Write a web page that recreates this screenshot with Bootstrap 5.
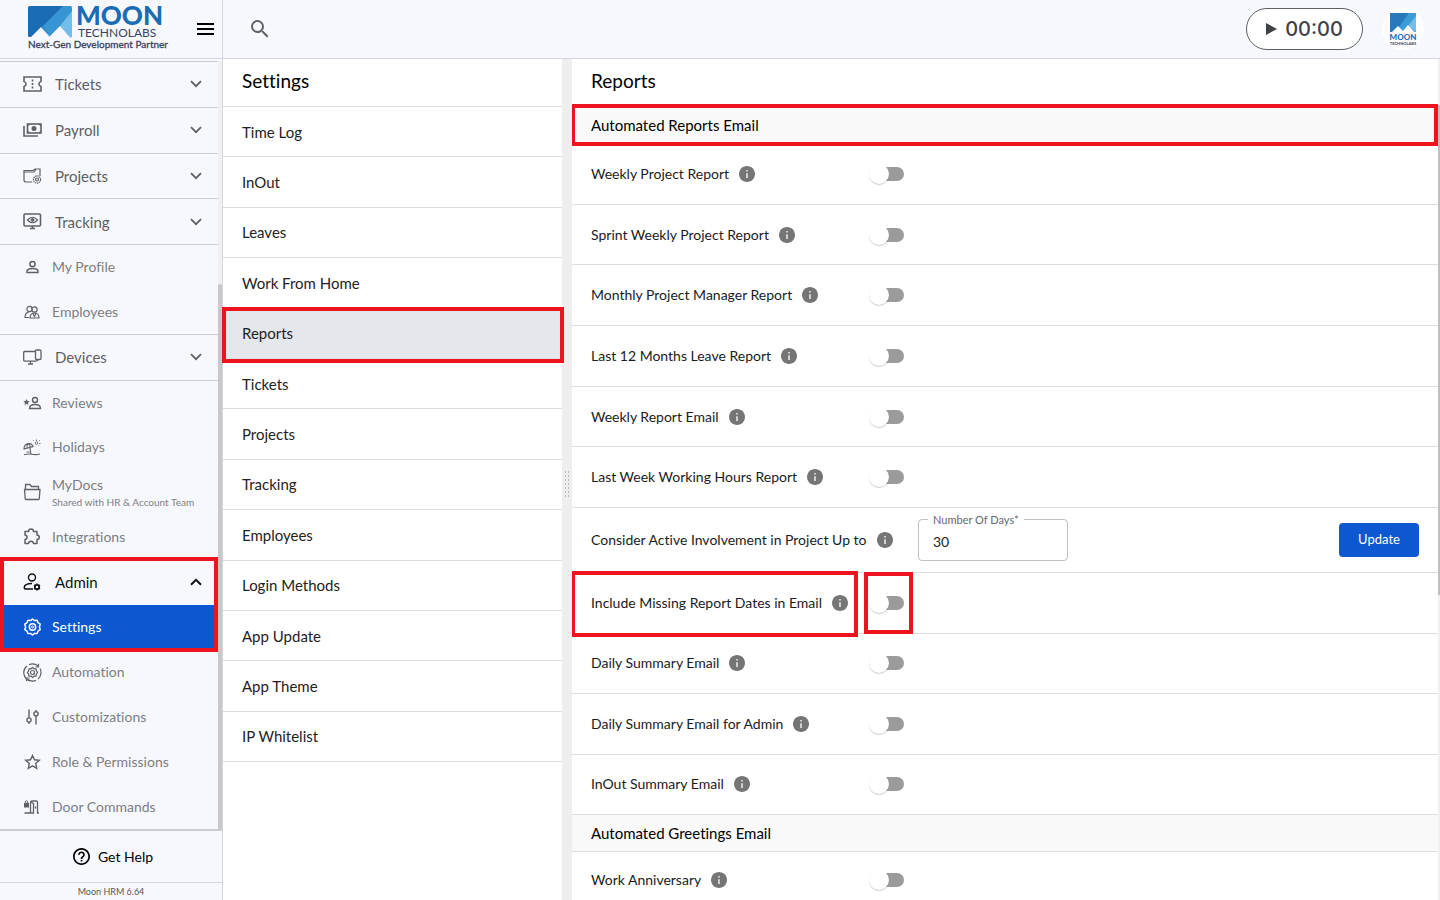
<!DOCTYPE html>
<html lang="en">
<head>
<meta charset="utf-8">
<meta name="viewport" content="width=device-width, initial-scale=1">
<title>Moon HRM - Settings - Reports</title>
<link href="https://cdn.jsdelivr.net/npm/bootstrap@5.3.0/dist/css/bootstrap.min.css" rel="stylesheet">
<style>
  :root { --line: #dcdee0; --blue: #0d57d0; --red: #ed1420; --pale: #f7f8fd; }
  body { font-family: Lato, "Open Sans", sans-serif; font-size: 14px; line-height: 20px; color: #1f2123; background: #fff; font-variant-ligatures: none; }
  a { text-decoration: none; color: inherit; }
  svg { flex: none; }
  .app { height: 100vh; display: grid; grid-template-columns: 223px minmax(0, 1fr); grid-template-rows: 59px minmax(0, 1fr); }
  .brand, .topbar { background: var(--pale); border-bottom: 1px solid #d3d6dc; }
  .brand, .sidebar { border-right: 1px solid #d3d6dc; }
  .icon-btn { border: 0; background: none; padding: 0; display: flex; }
  .timer { width: 117px; height: 42px; border: 1px solid #5c6066; border-radius: 21px; background: #fff; color: #3f4145; font-family: Inter, sans-serif; font-size: 20px; font-weight: 500; }
  .avatar { width: 42px; height: 42px; background: #fff; margin: 0 16px 0 19px; }

  .sidebar { background: var(--pale); min-height: 0; }
  .side-scroll { flex: 1 1 0; min-height: 0; padding-top: 2px; border-bottom: 2px solid #c9ccd0; }
  .side-menu { flex: 1 1 0; min-width: 0; display: flex; flex-direction: column; }
  .side-track { width: 4px; background: #f0f0f0; display: flex; flex-direction: column; justify-content: flex-end; }
  .side-thumb { height: 71%; background: #c8c8c8; border-radius: 2px 2px 0 0; }
  .side-group, .side-item { flex: 0 1 45px; min-height: 0; display: flex; align-items: center; padding-left: 23px; color: #7c7e82; width: 100%; }
  .side-group { flex-basis: 46px; gap: 13px; padding-right: 16px; border: 0; border-top: 1px solid #c9ccd1; background: none; font-size: 15px; color: #5c5e62; text-align: left; }
  .side-group span { flex: 1; }
  .side-item { gap: 10px; }
  .side-item svg, .side-group svg:first-child { color: #5f6165; }
  .line-top { border-top: 1px solid #c9ccd1; }
  .side-note { font-size: 10px; line-height: 14px; }
  .admin-block { position: relative; display: flex; flex-direction: column; flex: 0 1 91px; min-height: 0; }
  .admin-block .side-group, .admin-block .side-group svg:first-child { color: #101113; border: 0; }
  .side-item.current, .side-item.current svg { background: var(--blue); color: #fff; }
  .help { height: 51px; color: #000; }
  .version { height: 18px; border-top: 1px solid #d3d6dc; font-size: 9px; line-height: 18px; color: #55575b; }

  .mark-box { position: absolute; border: 4px solid var(--red); pointer-events: none; z-index: 2; }
  .mark-admin { inset: -2px 0 -2px 0; }
  .mark-current { inset: -2px -2px -5px -1px; }
  .mark-head { inset: -3px 0 -3px -1px; }
  .mark-label { inset: -2px auto -4px -1px; width: 287px; }
  .mark-switch { inset: -1px auto -1px 292px; width: 49px; }

  .panes { display: grid; grid-template-columns: 339fr 10px 868fr; min-height: 0; }
  .pane { min-width: 0; overflow: hidden; }
  .pane-title { height: 47px; padding: 0 19px; font-size: 19px; line-height: 44px; margin: 0; font-weight: 400; color: #000; }
  .option-list { display: flex; flex-direction: column; min-height: 656px; border-top: 1px solid var(--line); }
  .option-list a { flex: 1 1 0; position: relative; display: flex; align-items: center; padding: 0 19px; border-bottom: 1px solid var(--line); font-size: 15px; }
  .option-list a.current { background: #e4e7ec; }
  .splitter { background: #eee; }
  .grip { width: 6px; height: 29px; background: radial-gradient(circle, #bbb 1px, transparent 1px) 0 0 / 3px 4px; }
  .content-track { width: 2px; background: #f0f0f0; padding-top: 46px; }
  .content-thumb { height: 61%; background: #bfbfbf; }
  .section-head { position: relative; height: 38px; margin: 0; padding: 0 19px; font-size: 15px; font-weight: 400; line-height: 36px; color: #000; background: #f9f9f9; border-top: 1px solid var(--line); border-bottom: 1px solid var(--line); }
  .rows { display: flex; flex-direction: column; }
  .rows-six { min-height: 364px; }
  .rows-four { min-height: 241px; }
  .report-row { flex: 1 1 0; min-height: 57px; position: relative; display: flex; align-items: center; padding: 0 19px; border-bottom: 1px solid var(--line); }
  .rows-four .report-row:last-child { border-bottom: 0; }
  .label-cell { display: flex; align-items: center; gap: 10px; min-width: 279px; color: #1a1b1d; }
  .label-cell svg { color: #757575; }
  .days-row { flex: none; height: 65px; }
  .days-row .label-cell { min-width: 327px; }
  .toggle { appearance: none; position: relative; width: 34px; height: 14px; margin: 0; border-radius: 7px; background: #9b9b9b; cursor: pointer; }
  .toggle::before { content: ""; position: absolute; left: -1px; top: -3px; width: 20px; height: 20px; border-radius: 50%; background: #fff; box-shadow: 0 1px 1px rgba(0,0,0,.2); }
  .toggle:checked::before { left: 15px; background: var(--blue); }
  .days-field { position: relative; width: 150px; }
  .days-field input { height: 42px; border-color: #bfc1c4; border-radius: 4px; padding: 2px 14px 0; font-size: 14px; color: #1a1b1d; }
  .days-field label { position: absolute; left: 10px; top: -8px; padding: 0 5px; background: #fff; font-size: 11px; line-height: 18px; color: #66686c; }
  .btn-update { width: 80px; height: 34px; padding: 0; background: var(--blue); color: #fff; font-size: 13px; border-radius: 4px; }
  .btn-update:hover { background: #0b49b0; color: #fff; }
</style>
</head>
<body>
<svg width="0" height="0" class="position-absolute" aria-hidden="true">
  <symbol id="i-info" viewBox="2 2 20 20"><path fill="currentColor" d="M12 2C6.48 2 2 6.48 2 12s4.48 10 10 10 10-4.480 10-10S17.520 2 12 2z"/><path fill="#e8e8e8" d="M13 17h-2v-6h2zM13 9h-2V7h2z"/></symbol>
  <symbol id="i-down" viewBox="0 0 12 8"><path d="M1 1.200l5 5 5-5" fill="none" stroke="currentColor" stroke-width="1.700"/></symbol>
  <symbol id="i-up" viewBox="0 0 12 8"><path d="M1 6.800l5-5 5 5" fill="none" stroke="currentColor" stroke-width="2"/></symbol>
</svg>

<div class="app">
  <div class="brand d-flex align-items-center justify-content-between">
    <a href="#" aria-label="Moon Technolabs">
      <svg width="170" height="58" viewBox="0 0 170 58">
        <path fill="#1a6db5" d="M29.500 6H71v31H29.500q-1.500 0-1.500-1.500v-28Q28 6 29.500 6z"/>
        <path fill="#3795d3" d="M63 6h7.500q1.500 0 1.500 1.500V29L60 37H50L42 27z"/>
        <path fill="#73bdea" d="M72 11v25q0 2-2 2L60 26z"/>
        <path fill="#f7f8fd" d="M28 38.500h1.500L41 27l8.500 9.500L60 26l11 12.500z"/>
        <text x="76" y="25" font-family="Lato" font-weight="900" font-size="26" fill="#1a6db5">MOON</text>
        <text x="78" y="37" font-family="Lato" font-weight="400" font-size="12" fill="#3b4260">TECHNOLABS</text>
        <text x="28" y="48" font-family="Lato" font-weight="400" font-size="10" fill="#3b4260" stroke="#3b4260" stroke-width=".3">Next-Gen Development Partner</text>
      </svg>
    </a>
    <button class="icon-btn pe-2" aria-label="Toggle menu"><svg width="17" height="12" viewBox="0 0 17 12"><path d="M0 1h17M0 6h17M0 11h17" stroke="#000" stroke-width="2"/></svg></button>
  </div>

  <header class="topbar d-flex align-items-center ps-4">
    <button class="icon-btn ms-1" aria-label="Search"><svg width="18" height="18" viewBox="3 3 18 18"><path fill="#5f6368" d="M15.500 14h-.79l-.28-.27A6.471 6.471 0 0016 9.500 6.500 6.500 0 109.500 16c1.610 0 3.090-.59 4.230-1.570l.27.28v.79l5 4.990L20.490 19l-4.990-5zm-6 0C7.010 14 5 11.990 5 9.500S7.010 5 9.500 5 14 7.010 14 9.500 11.990 14 9.500 14z"/></svg></button>
    <button class="timer ms-auto d-flex align-items-center justify-content-center gap-2 p-0" aria-label="Start timer"><svg width="11" height="12" viewBox="0 0 11 12"><path d="M0 0l11 6-11 6z" fill="#3f4145"/></svg>00:00</button>
    <a href="#" class="avatar rounded-circle d-flex align-items-center justify-content-center" aria-label="Account">
      <svg width="28" height="34" viewBox="0 0 28 34">
        <path fill="#2878be" d="M1 1h26v19H1z"/><path fill="#3d9bd8" d="M20 1h7v19H13l-3-5z"/><path fill="#73bdea" d="M27 4v16l-8-6z"/><path fill="#fff" d="M1 22l8-8 5 5 5-6 8 9z"/>
        <text x="14" y="28" text-anchor="middle" font-family="Lato" font-weight="900" font-size="8" fill="#1a6db5">MOON</text>
        <text x="14" y="33" text-anchor="middle" font-family="Lato" font-weight="700" font-size="4" fill="#3b4260">TECHNOLABS</text>
      </svg>
    </a>
  </header>

  <aside class="sidebar d-flex flex-column">
    <div class="side-scroll d-flex">
      <nav class="side-menu" aria-label="Main">
        <button class="side-group"><svg width="19" height="16" viewBox="0 0 19 16" fill="none" stroke="currentColor" stroke-width="1.600"><path d="M1 1h17v4.500q-2 .5-2 2.500t2 2.500V15H1v-4.500Q3 10 3 8T1 5.500z"/><path d="M9.500 3.500v9" stroke-dasharray="2 1.500"/></svg><span>Tickets</span><svg width="12" height="8"><use href="#i-down"/></svg></button>
        <button class="side-group"><svg width="19" height="14" viewBox="0 0 19 14" fill="none" stroke="currentColor" stroke-width="1.600"><rect x="4.500" y="1" width="13.500" height="9"/><path d="M1 3v10h14"/><circle cx="11" cy="5.500" r="1.700" fill="currentColor"/><path d="M4.500 3.500l2-2.500M18 3.500L16 1M4.500 7.500l2 2.500M18 7.500L16 10" stroke-width="1"/></svg><span>Payroll</span><svg width="12" height="8"><use href="#i-down"/></svg></button>
        <button class="side-group"><svg width="19" height="16" viewBox="0 0 19 16" fill="none" stroke="currentColor" stroke-width="1.200"><path d="M9 14H3q-2 0-2-2V2.500h9L12 1h5v7M1 4h10l2-2.500"/><circle cx="14" cy="11.500" r="3.600" stroke-dasharray="1.500 .6"/><circle cx="14" cy="11.500" r="1.500"/></svg><span>Projects</span><svg width="12" height="8"><use href="#i-down"/></svg></button>
        <button class="side-group"><svg width="19" height="17" viewBox="0 0 19 17" fill="none" stroke="currentColor" stroke-width="1.600"><rect x="1" y="1" width="16.500" height="12" rx="1"/><path d="M7 15.500h5M9.500 13v2"/><path d="M4.500 7q5-5.500 10 0-5 5.500-10 0z" stroke-width="1.200"/><circle cx="9.500" cy="7" r="1.400" fill="currentColor" stroke-width="1"/></svg><span>Tracking</span><svg width="12" height="8"><use href="#i-down"/></svg></button>
        <a href="#" class="side-item line-top"><svg width="19" height="16" viewBox="0 0 19 16" fill="none" stroke="currentColor" stroke-width="1.500"><circle cx="9.500" cy="5" r="2.600"/><path d="M4 13.500v-1q0-3 5.500-3t5.500 3v1z"/></svg>My Profile</a>
        <a href="#" class="side-item"><svg width="19" height="16" viewBox="0 0 19 16" fill="none" stroke="currentColor" stroke-width="1.200"><circle cx="6.500" cy="5" r="2.600"/><circle cx="11.500" cy="5.500" r="2.600"/><path d="M6 13.500H2q0-5 4-5.500M7 14q0-5 4.500-5t4.500 5zM10 9.500l1.500 3 1.500-3"/></svg>Employees</a>
        <button class="side-group"><svg width="19" height="16" viewBox="0 0 19 16" fill="none" stroke="currentColor" stroke-width="1.300"><path d="M12 2.500H1.500q-.8 0-.8.8v8q0 .8.8.8H13q2 0 2-1.500M7.500 12v3M5 15h5"/><rect x="12.500" y="1" width="5.500" height="9.500" rx="1"/></svg><span>Devices</span><svg width="12" height="8"><use href="#i-down"/></svg></button>
        <a href="#" class="side-item line-top"><svg width="19" height="16" viewBox="0 0 19 16" fill="none" stroke="currentColor" stroke-width="1.400"><circle cx="12" cy="5" r="2.500"/><path d="M6.500 13.500q0-4 5.500-4t5.500 4z"/><path d="M3.500 4l1 2 2.200.2-1.700 1.500.5 2.200-2-1.200-2 1.200.5-2.200L.3 6.200 2.500 6z" fill="currentColor" stroke="none"/></svg>Reviews</a>
        <a href="#" class="side-item"><svg width="19" height="17" viewBox="0 0 19 17" fill="none" stroke="currentColor" stroke-width="1.100"><path d="M1 10q0-4.500 4-5.500 4-.5 5 3zM4 9q-.5-3 1-4.500M5 4.500q2 1 2.500 4M7 9l1 6.500M1 15.800q4-1.200 8-.5t8-.3M3.500 13h3"/><circle cx="13.500" cy="4" r="1.300" stroke-width=".8"/><path d="M13.500.5V2M16 2l.8-.8M16 4.500h1.500M15.500 6.300l.8.8M11 2l-.8-.8" stroke-width=".8"/></svg>Holidays</a>
        <a href="#" class="side-item"><svg width="19" height="19" viewBox="0 0 19 19" fill="none" stroke="currentColor" stroke-width="1.300" stroke-linejoin="round"><path d="M2.500 8V2.500h4.500l1.500 2h7V8"/><path d="M1.500 7.500h15.500l-.7 9q-.1 1-1 1H3.200q-.9 0-1-1z"/></svg><span>MyDocs<br><span class="side-note d-block">Shared with HR &amp; Account Team</span></span></a>
        <a href="#" class="side-item"><svg width="19" height="17" viewBox="0 0 19 17" fill="none" stroke="currentColor" stroke-width="1.500" stroke-linejoin="round"><path d="M2 3.500h3.500Q5.500 1 8 1t2.500 2.500H14V7q2.300.3 2.300 2.200T14 11.500V15.500h-3.500Q10.300 13.300 8 13.300T5.500 15.500H2V11.500q2-.3 2-2.300T2 7z"/></svg>Integrations</a>
        <div class="admin-block">
          <button class="side-group"><svg width="19" height="18" viewBox="0 0 19 18" fill="none" stroke="currentColor" stroke-width="1.400"><circle cx="9" cy="4.500" r="3.500"/><path d="M10 16H3Q1.200 16 1.200 14.500 1.500 10.500 9 10.500"/><circle cx="14" cy="14" r="2.200" stroke-width="1.800"/><path d="M14 10.500v1M14 16.500v1M11 12.200l.9.500M16.100 15.300l.9.500M17 12.200l-.9.500M11.900 15.300l-.9.500" stroke-width="1.500"/></svg><span>Admin</span><svg width="12" height="8"><use href="#i-up"/></svg></button>
          <a href="#" class="side-item current" aria-current="page"><svg width="19" height="18" viewBox="0 0 19 18" fill="none" stroke="currentColor" stroke-width="1.500" stroke-linejoin="round"><path d="M9.500 1l2 1.600 2.600-.3.900 2.400 2.200 1.400-.8 2.900.8 2.700-2.200 1.500-.9 2.400-2.600-.2-2 1.600-2-1.600-2.600.2-.9-2.400-2.200-1.500.8-2.700-.8-2.900L4 4.700l.9-2.400 2.600.3z"/><circle cx="9.500" cy="9" r="3.200"/><circle cx="9.500" cy="9" r="1" stroke-width="1"/></svg>Settings</a>
          <div class="mark-box mark-admin"></div>
        </div>
        <a href="#" class="side-item"><svg width="19" height="19" viewBox="0 0 19 19" fill="none" stroke="currentColor" stroke-width="1.200"><path d="M7 17.800A8.500 8.500 0 0 1 4 3M6 1.600A8.500 8.500 0 0 1 15 3M17 5.500a8.500 8.500 0 0 1-2 10.500M13 17.400a8.500 8.500 0 0 1-8-.9M15.500.8V4h-3M3.500 18v-3h3"/><path d="M9.500 4.500l1.500 1.300 2 .1.400 2 1.200 1.600-1.200 1.600-.4 2-2 .1-1.500 1.300L8 13.200l-2-.1-.4-2-1.200-1.600L5.600 7.900l.4-2 2-.1z"/><circle cx="9.500" cy="9.500" r="2"/></svg>Automation</a>
        <a href="#" class="side-item"><svg width="19" height="16" viewBox="0 0 19 16" fill="none" stroke="currentColor" stroke-width="1.400"><path d="M6 .5v8.500M6 13V15M13 15.500V7M13 2.500V1"/><circle cx="6" cy="11" r="2.100"/><circle cx="13" cy="4.800" r="2.100"/></svg>Customizations</a>
        <a href="#" class="side-item"><svg width="19" height="16" viewBox="0 0 19 16" fill="none" stroke="currentColor" stroke-width="1.400"><path d="M9.500 1.500l2 4.300 4.800.5-3.600 3.200 1 4.800-4.200-2.500-4.200 2.500 1-4.800-3.600-3.200 4.800-.5z"/></svg>Role &amp; Permissions</a>
        <a href="#" class="side-item"><svg width="19" height="16" viewBox="0 0 19 16" fill="none" stroke="currentColor" stroke-width="1.300"><path d="M1 4h5v4.500H1z" fill="currentColor" stroke="none"/><path d="M2.300 4V3q0-1.200 1.200-1.200T4.700 3v1" stroke-width="1"/><path d="M1.500 14h6V3.500Q7.500 2 9 2h4q1.500 0 1.500 1.500V14H16M7.500 3l3 1.500V14h-3M12.500 7.500v2"/></svg>Door Commands</a>
      </nav>
      <div class="side-track"><div class="side-thumb"></div></div>
    </div>
    <a href="#" class="help d-flex align-items-center justify-content-center gap-2 ps-1"><svg width="17" height="17" viewBox="2 2 20 20"><path fill="#000" d="M11 18h2v-2h-2v2zm1-16C6.480 2 2 6.480 2 12s4.480 10 10 10 10-4.480 10-10S17.520 2 12 2zm0 18c-4.410 0-8-3.590-8-8s3.590-8 8-8 8 3.590 8 8-3.590 8-8 8zm0-14c-2.210 0-4 1.790-4 4h2c0-1.100.9-2 2-2s2 .9 2 2c0 2-3 1.750-3 5h2c0-2.250 3-2.500 3-5 0-2.210-1.790-4-4-4z"/></svg>Get Help</a>
    <div class="version text-center">Moon HRM 6.64</div>
  </aside>

  <main class="panes">
    <section class="pane overflow-visible">
      <h2 class="pane-title">Settings</h2>
      <nav class="option-list" aria-label="Settings">
        <a href="#">Time Log</a>
        <a href="#">InOut</a>
        <a href="#">Leaves</a>
        <a href="#">Work From Home</a>
        <a href="#" class="current" aria-current="page">Reports<span class="mark-box mark-current"></span></a>
        <a href="#">Tickets</a>
        <a href="#">Projects</a>
        <a href="#">Tracking</a>
        <a href="#">Employees</a>
        <a href="#">Login Methods</a>
        <a href="#">App Update</a>
        <a href="#">App Theme</a>
        <a href="#">IP Whitelist</a>
      </nav>
    </section>
    <div class="splitter d-flex align-items-center justify-content-center"><div class="grip"></div></div>
    <section class="d-flex overflow-visible">
      <div class="pane flex-grow-1" id="reports">
        <h1 class="pane-title">Reports</h1>
        <h2 class="section-head">Automated Reports Email<span class="mark-box mark-head"></span></h2>
        <div class="rows rows-six">
          <div class="report-row"><label class="label-cell" for="r1">Weekly Project Report<svg width="16" height="16"><use href="#i-info"/></svg></label><input class="toggle" type="checkbox" role="switch" id="r1"></div>
          <div class="report-row"><label class="label-cell" for="r2">Sprint Weekly Project Report<svg width="16" height="16"><use href="#i-info"/></svg></label><input class="toggle" type="checkbox" role="switch" id="r2"></div>
          <div class="report-row"><label class="label-cell" for="r3">Monthly Project Manager Report<svg width="16" height="16"><use href="#i-info"/></svg></label><input class="toggle" type="checkbox" role="switch" id="r3"></div>
          <div class="report-row"><label class="label-cell" for="r4">Last 12 Months Leave Report<svg width="16" height="16"><use href="#i-info"/></svg></label><input class="toggle" type="checkbox" role="switch" id="r4"></div>
          <div class="report-row"><label class="label-cell" for="r5">Weekly Report Email<svg width="16" height="16"><use href="#i-info"/></svg></label><input class="toggle" type="checkbox" role="switch" id="r5"></div>
          <div class="report-row"><label class="label-cell" for="r6">Last Week Working Hours Report<svg width="16" height="16"><use href="#i-info"/></svg></label><input class="toggle" type="checkbox" role="switch" id="r6"></div>
        </div>
        <div class="report-row days-row">
          <div class="label-cell">Consider Active Involvement in Project Up to<svg width="16" height="16"><use href="#i-info"/></svg></div>
          <div class="days-field"><input class="form-control" type="text" id="days" value="30"><label for="days">Number Of Days*</label></div>
          <button class="btn btn-update ms-auto">Update</button>
        </div>
        <div class="rows rows-four">
          <div class="report-row"><label class="label-cell" for="r7">Include Missing Report Dates in Email<svg width="16" height="16"><use href="#i-info"/></svg></label><input class="toggle" type="checkbox" role="switch" id="r7"><span class="mark-box mark-label"></span><span class="mark-box mark-switch"></span></div>
          <div class="report-row"><label class="label-cell" for="r8">Daily Summary Email<svg width="16" height="16"><use href="#i-info"/></svg></label><input class="toggle" type="checkbox" role="switch" id="r8"></div>
          <div class="report-row"><label class="label-cell" for="r9">Daily Summary Email for Admin<svg width="16" height="16"><use href="#i-info"/></svg></label><input class="toggle" type="checkbox" role="switch" id="r9"></div>
          <div class="report-row"><label class="label-cell" for="r10">InOut Summary Email<svg width="16" height="16"><use href="#i-info"/></svg></label><input class="toggle" type="checkbox" role="switch" id="r10"></div>
        </div>
        <h2 class="section-head">Automated Greetings Email</h2>
        <div class="report-row"><label class="label-cell" for="r11">Work Anniversary<svg width="16" height="16"><use href="#i-info"/></svg></label><input class="toggle" type="checkbox" role="switch" id="r11"></div>
      </div>
      <div class="content-track"><div class="content-thumb"></div></div>
    </section>
  </main>
</div>
<script src="https://cdn.jsdelivr.net/npm/bootstrap@5.3.0/dist/js/bootstrap.bundle.min.js"></script>
</body>
</html>
